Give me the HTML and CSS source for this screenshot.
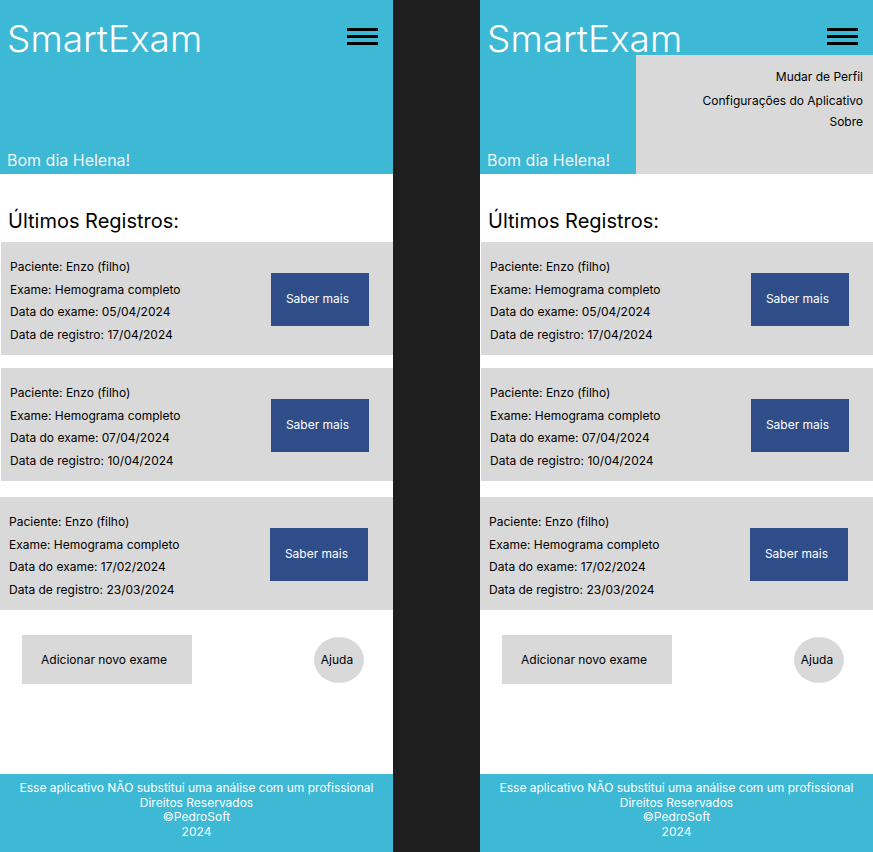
FILE: index.html
```html
<!DOCTYPE html>
<html lang="pt">
<head>
<meta charset="utf-8">
<title>SmartExam</title>
<link rel="stylesheet" href="styles.css">
</head>
<body>
<div class="canvas">
  <section class="screen">
    <header class="top">
      <div class="top-row">
        <h1 class="brand">SmartExam</h1>
        <button class="burger" aria-label="Menu"><span></span><span></span><span></span></button>
      </div>
      <p class="greet">Bom dia Helena!</p>
    </header>
    <h2 class="section-title">Últimos Registros:</h2>
    <div class="card">
      <div class="info"><p>Paciente: Enzo (filho)</p><p>Exame: Hemograma completo</p><p>Data do exame: 05/04/2024</p><p>Data de registro: 17/04/2024</p></div>
      <button class="more">Saber mais</button>
    </div>
    <div class="card card-2">
      <div class="info"><p>Paciente: Enzo (filho)</p><p>Exame: Hemograma completo</p><p>Data do exame: 07/04/2024</p><p>Data de registro: 10/04/2024</p></div>
      <button class="more">Saber mais</button>
    </div>
    <div class="card card-3">
      <div class="info"><p>Paciente: Enzo (filho)</p><p>Exame: Hemograma completo</p><p>Data do exame: 17/02/2024</p><p>Data de registro: 23/03/2024</p></div>
      <button class="more">Saber mais</button>
    </div>
    <div class="actions">
      <button class="add">Adicionar novo exame</button>
      <button class="help">Ajuda</button>
    </div>
    <footer class="foot">
      <p>Esse aplicativo NÃO substitui uma análise com um profissional</p>
      <p>Direitos Reservados</p>
      <p>©PedroSoft</p>
      <p>2024</p>
    </footer>
  </section>

  <section class="screen screen-right">
    <header class="top">
      <div class="top-row">
        <h1 class="brand">SmartExam</h1>
        <button class="burger" aria-label="Menu"><span></span><span></span><span></span></button>
      </div>
      <p class="greet">Bom dia Helena!</p>
    </header>
    <nav class="menu">
      <a class="menu-item m1">Mudar de Perfil</a>
      <a class="menu-item m2">Configurações do Aplicativo</a>
      <a class="menu-item m3">Sobre</a>
    </nav>
    <h2 class="section-title">Últimos Registros:</h2>
    <div class="card">
      <div class="info"><p>Paciente: Enzo (filho)</p><p>Exame: Hemograma completo</p><p>Data do exame: 05/04/2024</p><p>Data de registro: 17/04/2024</p></div>
      <button class="more">Saber mais</button>
    </div>
    <div class="card card-2">
      <div class="info"><p>Paciente: Enzo (filho)</p><p>Exame: Hemograma completo</p><p>Data do exame: 07/04/2024</p><p>Data de registro: 10/04/2024</p></div>
      <button class="more">Saber mais</button>
    </div>
    <div class="card card-3">
      <div class="info"><p>Paciente: Enzo (filho)</p><p>Exame: Hemograma completo</p><p>Data do exame: 17/02/2024</p><p>Data de registro: 23/03/2024</p></div>
      <button class="more">Saber mais</button>
    </div>
    <div class="actions">
      <button class="add">Adicionar novo exame</button>
      <button class="help">Ajuda</button>
    </div>
    <footer class="foot">
      <p>Esse aplicativo NÃO substitui uma análise com um profissional</p>
      <p>Direitos Reservados</p>
      <p>©PedroSoft</p>
      <p>2024</p>
    </footer>
  </section>
</div>
</body>
</html>
```
FILE: styles.css
```css
* { box-sizing: border-box; }
html, body { margin: 0; padding: 0; }
body {
  background: #1e1e1e;
  font-family: Inter, "Noto Sans", sans-serif;
  color: #000;
  width: 873px;
  height: 852px;
  overflow: hidden;
}
p, h1, h2 { margin: 0; }
button { font-family: inherit; border: 0; padding: 0; cursor: pointer; }

.canvas {
  display: flex;
  gap: 87px;
}
.screen {
  position: relative;
  width: 393px;
  height: 852px;
  background: #fff;
  display: flex;
  flex-direction: column;
}

.top {
  height: 174px;
  background: #3db8d5;
  display: flex;
  flex-direction: column;
  justify-content: space-between;
  padding: 16px 15px 4px 7px;
}
.top-row {
  display: flex;
  justify-content: space-between;
  align-items: flex-start;
}
.brand {
  font-size: 37px;
  font-weight: 300;
  line-height: 46px;
  color: #fff;
}
.burger {
  background: none;
  width: 31px;
  display: flex;
  flex-direction: column;
  gap: 4.5px;
  margin-top: 12px;
}
.burger span {
  display: block;
  height: 2.5px;
  background: #000;
}
.greet {
  font-size: 16px;
  line-height: 20px;
  color: #f4f4f4;
}

.section-title {
  font-size: 20px;
  font-weight: 400;
  line-height: 24px;
  margin: 35px 0 9px 8px;
}

.card {
  background: #d9d9d9;
  margin-left: 1px;
  height: 113px;
  display: flex;
  align-items: center;
  justify-content: space-between;
  padding: 0 24px 0 9px;
}
.card-2 { margin-top: 13px; }
.card-3 { margin-top: 16px; margin-left: 0; padding-right: 25px; }
.info {
  font-size: 12px;
  line-height: 22.5px;
  padding-top: 5px;
}
.more {
  width: 98px;
  height: 53px;
  background: #2f4e89;
  color: #fff;
  font-size: 12px;
  margin-top: 2px;
  padding: 0 5px 2px 0;
}

.actions {
  display: flex;
  justify-content: space-between;
  align-items: center;
  padding: 0 29px 0 22px;
  margin-top: 25px;
}
.add {
  width: 170px;
  height: 49px;
  background: #d9d9d9;
  font-size: 12px;
  color: #000;
  padding-right: 6px;
}
.help {
  width: 50px;
  height: 46px;
  border-radius: 50%;
  background: #d9d9d9;
  font-size: 12px;
  color: #000;
  padding-right: 4px;
}

.foot {
  margin-top: auto;
  height: 78px;
  background: #3db8d5;
  color: #fff;
  text-align: center;
  font-size: 12px;
  line-height: 14.5px;
  padding-top: 7px;
}

.menu {
  position: absolute;
  top: 55px;
  right: 0;
  width: 237px;
  height: 119px;
  background: #d9d9d9;
  display: flex;
  flex-direction: column;
  align-items: flex-end;
  padding: 14px 10px 0 0;
  font-size: 12px;
  line-height: 16px;
}
.menu-item { display: block; color: #000; }
.m2 { margin-top: 8px; }
.m3 { margin-top: 5px; }
```
